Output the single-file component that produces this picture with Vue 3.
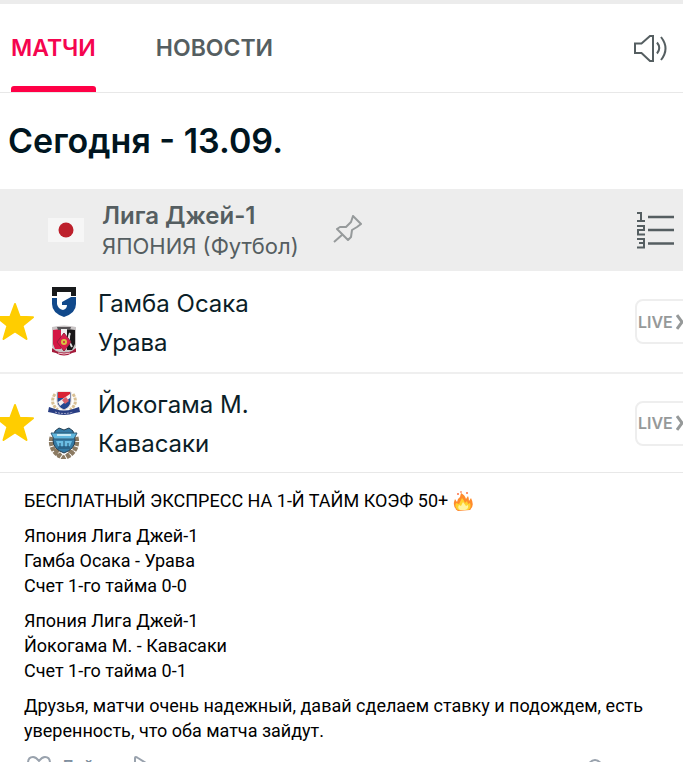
<script setup>
const matches = [
  { id: 1, home: 'Гамба Осака', away: 'Урава', homeCrest: 'gamba', awayCrest: 'urawa' },
  { id: 2, home: 'Йокогама М.', away: 'Кавасаки', homeCrest: 'yokohama', awayCrest: 'kawasaki' },
]
</script>

<template>
  <main class="post">
    <section class="board">
      <nav class="tabs">
        <a href="#matches" class="tab tab-active">МАТЧИ</a>
        <a href="#news" class="tab">НОВОСТИ</a>
        <button type="button" class="icon-btn sound-btn" aria-label="Звук">
          <svg width="36" height="30" viewBox="0 0 36 30" fill="none" stroke="#555e61" stroke-width="2">
            <path d="M2 10.500h6.500L17 3h3v25h-3l-8.500-8H2z" />
            <path d="M24 9.500q4.500 5.500 0 11M28 4q9 11.500 0 23" />
          </svg>
        </button>
      </nav>

      <h1 class="day">Сегодня - 13.09.</h1>

      <header class="league">
        <svg class="flag" width="36" height="24" viewBox="0 0 36 24">
          <rect width="36" height="24" fill="#f6f6f6" />
          <circle cx="18" cy="12" r="7.500" fill="#bd202c" />
        </svg>
        <div class="league-text">
          <h2 class="league-name">Лига Джей-1</h2>
          <p class="league-country">ЯПОНИЯ (Футбол)</p>
        </div>
        <button type="button" class="icon-btn" aria-label="Закрепить">
          <svg width="30" height="30" viewBox="0 0 30 30" fill="none" stroke="#969a9b" stroke-width="2" stroke-linejoin="round">
            <path d="M20 1l8 8-4 3-5 3-1 7-3 3L4 14l3-2 6 0 5-5z" />
            <path d="M9.500 19.500L1 27" />
          </svg>
        </button>
        <button type="button" class="icon-btn table-btn" aria-label="Таблица">
          <svg width="40" height="42" viewBox="0 0 40 42" fill="none" stroke="#555e61" stroke-width="2">
            <path d="M2 4h4v8M2 12h8" />
            <path d="M2 17h7v4H3v4.500h7" />
            <path d="M2 30h7v8.500H2M4 34h5" />
            <path d="M13 8h26M13 21h26M13 34.500h26" stroke-width="2.500" />
          </svg>
        </button>
      </header>

      <ul class="matches">
        <li v-for="match in matches" :key="match.id" class="match">
          <button type="button" class="icon-btn star-btn" aria-label="В избранное">
            <svg width="40" height="40" viewBox="0 0 40 40">
              <path
                d="M20 2l4.600 12.700L38 15.200 27.500 23.600 31.500 37 20 29.500 8.500 37l4-13.400L2 15.200l13.400-.5z"
                fill="#ffcd00"
                stroke="#ffcd00"
                stroke-width="2"
                stroke-linejoin="round"
              />
            </svg>
          </button>

          <div class="teams">
            <div v-for="side in ['home', 'away']" :key="side" class="team">
              <svg v-if="match[side + 'Crest'] === 'gamba'" class="crest" viewBox="0 0 32 32">
                <path d="M4 1h24v9h-5V6H9v4H4z" fill="#181a1c" />
                <path d="M4 12h5v6q1 5 6 6 4-1 4-5h-5v-3l9-5h5v7q0 9-12 13Q4 27 4 18z" fill="#11498b" />
              </svg>
              <svg v-else-if="match[side + 'Crest'] === 'urawa'" class="crest" viewBox="0 0 32 32">
                <path d="M4 2q12-3 24 0v19l-2 6q-10 6-20 0l-2-6z" fill="#c9c4c5" />
                <path d="M5 5l8-1v20H7l-2-5z" fill="#d41745" />
                <path d="M19 4l8 1v14l-3 6h-5z" fill="#1a1719" />
                <path d="M9 2h14l-1 3H10z" fill="#575356" />
                <path d="M13 4h6v8h-6z" fill="#eee" />
                <path d="M22 8q-3 6 2 14" fill="none" stroke="#ddd" stroke-width="2" />
                <path d="M16 8l7 9-7 9-7-9z" fill="#d91d4b" stroke="#95203a" />
                <circle cx="16" cy="17" r="3" fill="#d9c340" />
                <circle cx="16" cy="17" r="1" fill="#d41745" />
                <path d="M4 23l4 3q8 3 16 0l4-3v4l-4 1q-8 5-16 0l-4-1z" fill="#a4193a" />
                <path d="M10 28q6 2 12 0" fill="none" stroke="#f2c9d2" />
              </svg>
              <svg v-else-if="match[side + 'Crest'] === 'yokohama'" class="crest" viewBox="0 0 32 32">
                <path d="M7 6Q1 15 10 22M25 6q6 9-3 16" fill="none" stroke="#d9c094" stroke-width="3" stroke-dasharray="3 1" />
                <path d="M9 4h14v9q0 6-7 9-7-3-7-9z" fill="#25478f" stroke="#e0d3cb" />
                <path d="M10 4h12v6H10z" fill="#d92334" />
                <path d="M10 14L22 6v4l-10 8z" fill="#f3f0f2" />
                <path d="M14 12l4-3 3 4-4 3z" fill="#d8616b" />
                <path d="M1 19l6 2q9 3 18 0l6-2 1 5-5 1q-11 4-22 0l-5-1z" fill="#293e83" />
                <path d="M7 24q9 3 18 0" fill="none" stroke="#a8abc9" stroke-dasharray="2 1" />
              </svg>
              <svg v-else class="crest" viewBox="0 0 32 32">
                <path d="M4 10Q1 22 12 29M28 10q3 12-8 19M8 22q2 7 8 9 6-2 8-9" fill="none" stroke="#8b7a62" stroke-width="5" stroke-dasharray="4 1" />
                <path d="M7 4l4-3 5 2 5-2 4 3 2 9q0 9-11 13Q5 22 5 13z" fill="#347ba6" stroke="#243d50" />
                <path d="M3 6h26l-3 6H6z" fill="#62b8df" stroke="#315a74" />
                <path d="M9 8h14" stroke="#c9eaf6" stroke-width="2" />
                <path d="M8 14h16l-2 5H10z" fill="#6bbde4" />
                <path d="M10 21h12M12 16v4M16 14v6M20 16v4" stroke="#214c6c" />
              </svg>
              <span class="team-name">{{ match[side] }}</span>
            </div>
          </div>

          <button type="button" class="live-btn">
            LIVE
            <svg width="8" height="18" viewBox="0 0 8 18" fill="none" stroke="#969999" stroke-width="3">
              <path d="M1 2l5 7-5 7" />
            </svg>
          </button>
        </li>
      </ul>
    </section>

    <article class="message">
      <p>
        БЕСПЛАТНЫЙ ЭКСПРЕСС НА 1-Й ТАЙМ КОЭФ 50+
        <svg class="fire" width="20" height="20" viewBox="0 0 20 20" role="img" aria-label="Огонь">
          <path d="M5 20Q0 17 1 11l1-3 2 3q0-3 3-5l1-4q4 2 5 6l2-3q1 2 1 5l2-3q4 8-1 12z" fill="#ff8b2c" />
          <path d="M5 19q-4-3-2-7l3 1 3-6q2 2 3 5l2-2 1 3 2-1q2 5-2 7z" fill="#ffd22e" />
          <path d="M7 19q-3-2-1-5l2 1 2-4 3 4 2-1q1 4-3 5z" fill="#fff3a0" />
          <circle cx="5" cy="3" r="1" fill="#ff7043" />
          <circle cx="14" cy="2" r="1" fill="#ff7043" />
          <circle cx="8" cy="1" r="1" fill="#ff9a76" />
        </svg>
      </p>
      <p>Япония Лига Джей-1<br />Гамба Осака - Урава<br />Счет 1-го тайма 0-0</p>
      <p>Япония Лига Джей-1<br />Йокогама М. - Кавасаки<br />Счет 1-го тайма 0-1</p>
      <p>Друзья, матчи очень надежный, давай сделаем ставку и подождем, есть уверенность, что оба матча зайдут.</p>
    </article>

    <footer class="actions">
      <button type="button" class="action">
        <svg width="24" height="22" viewBox="0 0 24 22" fill="none" stroke="#99a2ad" stroke-width="2">
          <path d="M12 5Q9 1 6 1 1 1 1 7q0 6 11 14Q23 13 23 7q0-6-5-6-3 0-6 4z" />
        </svg>
        Лайк
      </button>
      <button type="button" class="action" aria-label="Поделиться">
        <svg width="24" height="22" viewBox="0 0 24 22" fill="none" stroke="#99a2ad" stroke-width="2" stroke-linejoin="round">
          <path d="M3 6V2q0-2 3 0l16 10L6 21q-3 1-3-2v-3Q1 10 3 6z" />
        </svg>
      </button>
      <span class="views">
        <svg width="18" height="14" viewBox="0 0 18 14" fill="none" stroke="#99a2ad" stroke-width="2">
          <path d="M1 7q8-12 16 0-8 12-16 0z" />
          <circle cx="9" cy="7" r="2" />
        </svg>
      </span>
    </footer>
  </main>
</template>

<style>
body {
  margin: 0;
  background: #fff;
}
</style>

<style scoped>
.post {
  height: 100vh;
  overflow: hidden;
  font-family: Roboto, "Noto Sans", sans-serif;
  color: #000;
}

.board {
  border-top: 4px solid #ececec;
  border-bottom: 1px solid #e8e8e8;
  font-family: Inter, "Noto Sans", sans-serif;
  color: #0b1e28;
}

h1,
h2,
p,
ul {
  margin: 0;
  padding: 0;
}

button {
  font-family: inherit;
  cursor: pointer;
}

.icon-btn {
  display: flex;
  flex-shrink: 0;
  padding: 0;
  border: 0;
  background: none;
}

.tabs {
  display: flex;
  align-items: stretch;
  gap: 60px;
  height: 88px;
  padding: 0 14px 0 11px;
  border-bottom: 1px solid #e8e8e8;
}

.tab {
  color: #555e61;
  font-size: 23px;
  font-weight: 600;
  line-height: 88px;
  text-decoration: none;
}

.tab-active {
  position: relative;
  color: #f5054f;
}

.tab-active::after {
  position: absolute;
  right: 0;
  bottom: 0;
  left: 0;
  height: 6px;
  border-radius: 3px 3px 0 0;
  background: #ff0046;
  content: '';
}

.sound-btn {
  align-items: center;
  margin-left: auto;
}

.day {
  padding: 0 8px;
  color: #001520;
  font-size: 34px;
  font-weight: 600;
  line-height: 96px;
}

.league {
  display: flex;
  align-items: center;
  height: 82px;
  padding: 0 8px 0 48px;
  background: #ededed;
  color: #555e61;
}

.flag {
  flex-shrink: 0;
  margin-right: 18px;
}

.league-text {
  margin-right: 34px;
  padding-top: 2px;
}

.league-name {
  font-size: 24px;
  font-weight: 600;
  line-height: 30px;
}

.league-country {
  font-size: 22px;
  line-height: 30px;
}

.table-btn {
  margin-left: auto;
}

.matches {
  list-style: none;
}

.match {
  display: flex;
  align-items: center;
  height: 101px;
  overflow: hidden;
}

.match + .match {
  border-top: 2px solid #efefef;
  height: 98px;
}

.star-btn {
  margin-left: -5px;
}

.teams {
  flex: 1;
  padding-left: 13px;
}

.team {
  display: flex;
  align-items: center;
  height: 39px;
}

.crest {
  flex-shrink: 0;
  width: 32px;
  height: 32px;
  margin-right: 18px;
}

.team-name {
  padding-top: 2px;
  font-size: 24px;
}

.live-btn {
  display: flex;
  flex-shrink: 0;
  align-items: center;
  gap: 3px;
  box-sizing: border-box;
  width: 56px;
  height: 45px;
  margin-right: -8px;
  padding: 0 1px;
  border: 2px solid #eee;
  border-radius: 8px;
  background: #fff;
  color: #969999;
  font-size: 16px;
  font-weight: 600;
}

.message {
  display: flex;
  flex-direction: column;
  gap: 10px;
  padding: 15px 24px 13px;
  font-size: 18px;
  line-height: 25px;
}

.fire {
  vertical-align: -4px;
}

.actions {
  display: flex;
  align-items: flex-start;
  gap: 28px;
  padding: 0 79px 10px 27px;
}

.action {
  display: flex;
  align-items: center;
  gap: 10px;
  padding: 0;
  border: 0;
  background: none;
  color: #8190a0;
  font-size: 18px;
  font-weight: 500;
  line-height: 22px;
}

.views {
  margin-left: auto;
  padding-top: 2px;
}
</style>
